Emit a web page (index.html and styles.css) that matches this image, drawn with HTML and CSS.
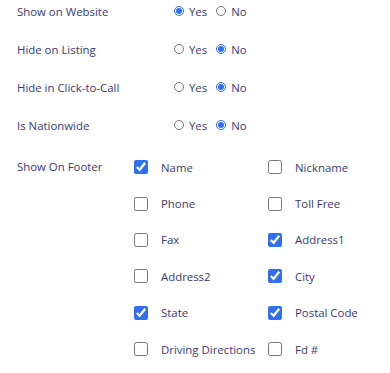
FILE: index.html
```html
<!DOCTYPE html>
<html lang="en">
<head>
  <meta charset="UTF-8" />
  <meta name="viewport" content="width=device-width, initial-scale=1.0"/>
  <title>Listing Settings</title>
  <link rel="stylesheet" href="styles.css">
</head>
<body>
  <div class="settings">
    <div class="row">
      <div class="label">Show on Website</div>
      <div class="radios">
        <label class="radio"><input type="radio" name="website" checked> Yes</label>
        <label class="radio"><input type="radio" name="website"> No</label>
      </div>
    </div>
    <div class="row">
      <div class="label">Hide on Listing</div>
      <div class="radios">
        <label class="radio"><input type="radio" name="listing"> Yes</label>
        <label class="radio"><input type="radio" name="listing" checked> No</label>
      </div>
    </div>
    <div class="row">
      <div class="label">Hide in Click-to-Call</div>
      <div class="radios">
        <label class="radio"><input type="radio" name="call"> Yes</label>
        <label class="radio"><input type="radio" name="call" checked> No</label>
      </div>
    </div>
    <div class="row">
      <div class="label">Is Nationwide</div>
      <div class="radios">
        <label class="radio"><input type="radio" name="nation"> Yes</label>
        <label class="radio"><input type="radio" name="nation" checked> No</label>
      </div>
    </div>

    <div class="footer-row">
      <div class="label footer-label">Show On Footer</div>
      <div class="checks">
        <label class="check"><input type="checkbox" checked> Name</label>
        <label class="check"><input type="checkbox"> Nickname</label>
        <label class="check"><input type="checkbox"> Phone</label>
        <label class="check"><input type="checkbox"> Toll Free</label>
        <label class="check"><input type="checkbox"> Fax</label>
        <label class="check"><input type="checkbox" checked> Address1</label>
        <label class="check"><input type="checkbox"> Address2</label>
        <label class="check"><input type="checkbox" checked> City</label>
        <label class="check"><input type="checkbox" checked> State</label>
        <label class="check"><input type="checkbox" checked> Postal Code</label>
        <label class="check"><input type="checkbox"> Driving Directions</label>
        <label class="check"><input type="checkbox"> Fd #</label>
      </div>
    </div>
  </div>
</body>
</html>
```

FILE: styles.css
```css
body {
  margin: 0;
  font-family: 'Open Sans', sans-serif;
  font-size: 11.4px;
  color: #3b3a6b;
  background: #fff;
}

.settings {
  padding: 0 0 0 17px;
}

.row {
  display: flex;
  align-items: center;
  height: 38px;
  margin-top: -8px;
  margin-bottom: 8px;
}

.label {
  width: 157px;
}

.radios {
  display: flex;
  gap: 9px;
}

.radio {
  display: flex;
  align-items: center;
}

.radio input {
  width: 10px;
  height: 10px;
  margin: 0 5px 0 0;
  accent-color: #2f6ff0;
}

.footer-row {
  display: flex;
  align-items: flex-start;
  margin-top: -3px;
}

.footer-label {
  width: 117px;
  line-height: 36px;
}

.checks {
  display: grid;
  grid-template-columns: 134px 120px;
  grid-auto-rows: 36.4px;
}

.check {
  display: flex;
  align-items: center;
}

.check input {
  width: 14px;
  height: 14px;
  margin: 0 13px 0 0;
  accent-color: #2f6ff0;
}
```
